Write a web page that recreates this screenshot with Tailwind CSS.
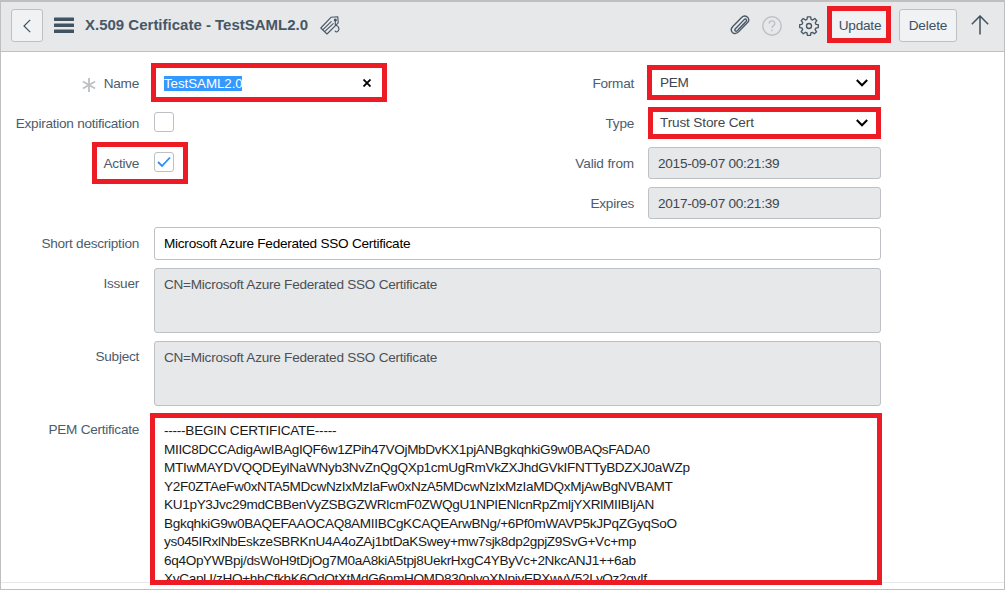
<!DOCTYPE html>
<html lang="en">
<head>
<meta charset="utf-8">
<title>X.509 Certificate</title>
<script src="https://cdn.jsdelivr.net/npm/@tailwindcss/browser@4"></script>
</head>
<body class="bg-white">
<div class="w-[1005px] h-[590px] overflow-hidden border border-[#bfbfbf] border-t-2 flex flex-col font-['Liberation_Sans',Arial,sans-serif] text-[13.6px] tracking-[-0.26px] leading-4 text-[#4d5c6b]">
  <header class="h-[50px] shrink-0 bg-[#e6e8ea] border-b border-[#bdc0c4] flex items-start pl-2.5 pr-[15px] pt-[7px]">
    <button class="w-8 h-[33px] border border-[#bdc0c4] rounded-[3px] bg-[#f1f2f4] flex items-center justify-center">
      <svg class="w-2 h-3.5" viewBox="0 0 8 14" fill="none" stroke="#40505f" stroke-width="1.2"><path d="M7.2.8 1 7l6.2 6.2"/></svg>
    </button>
    <svg class="w-5 h-4 ml-[11px] mt-2" viewBox="0 0 20 16" fill="#43525f"><rect y=".4" width="20" height="3.6" rx=".6"/><rect y="6.4" width="20" height="3.6" rx=".6"/><rect y="12.4" width="20" height="3.6" rx=".6"/></svg>
    <h1 class="ml-[11px] mt-2 w-[224px] whitespace-nowrap text-[15px] tracking-normal font-bold text-[#485766]">X.509 Certificate - TestSAML2.0</h1>
    <svg class="w-5 h-[19px] ml-[11px] mt-[7px]" viewBox="0 0 20 19" fill="none" stroke="#485766" stroke-width="1.1" stroke-linejoin="round" stroke-linecap="round"><path d="M11.2 1.2 17.8.8l.4 6.1L7 18 .8 12zM3.2 13.3l8-7.6M5.2 15.2l8-7.6"/><circle cx="15.3" cy="4" r="1" fill="#485766"/><path d="M15.3 4v4.8c2.4 1 4 2.7 3.5 4.9-.4 2.2-2.6 2.8-3.6 1.4"/></svg>
    <div class="ml-auto flex">
      <svg class="w-5 h-5 mt-1.5" viewBox="0 0 20 20" fill="none" stroke="#485766" stroke-width="1.35" stroke-linecap="round"><path d="m14.5 8.2-7.1 7.4c-1.6 1.6-3.5-.3-2-1.9l8.8-9.1M17.8 7.2l-9 9.4c-1.8 1.9-4.4 2.7-6.4.8-2-2-1.2-4.3.6-6.2l8.6-8.7c1.4-1.5 3.8-2 5.7-.4 2 1.7 1.8 3.7.5 5.1zM14.2 4.6c1.6-1.6 3.3.4 1.8 1.9l-7.7 8"/></svg>
      <svg class="w-5 h-5 ml-3 mt-[7px]" viewBox="0 0 20 20" fill="none" stroke="#bdc1c6" stroke-width="1.4"><circle cx="10" cy="10" r="9.2"/><path d="M7.2 7.6c0-3.6 5.6-3.5 5.6-.2 0 2.2-2.8 2.2-2.8 4.6M10 13.6v1.6"/></svg>
      <svg class="w-5 h-5 ml-[17px] mt-[7px]" viewBox="0 0 20 20" fill="none" stroke="#485766" stroke-width="1.35" stroke-linejoin="round"><path d="m8.4.8h3.2l.5 2.6 1.5.6L15.8 2.5l2 2.2-1.5 2 .6 1.6 2.4.4v2.9l-2.5.5-.7 1.5 1.5 2.2-2.2 2-2-1.4-1.5.6-.4 2.3H8.4L8 16.9l-1.5-.6-2.2 1.4-2.1-2 1.5-2.2-.7-1.5L.7 11.6V8.7L3 8.3l.7-1.6-1.5-2 2-2.2L6.4 4l1.5-.6z"/><circle cx="10" cy="10" r="2.5"/></svg>
      <button class="w-16 h-[37px] ml-2 -mt-[3px] pt-0.5 pl-0.5 border-5 border-[#ed1c24] bg-[#f1f2f4] text-center text-[13.6px] tracking-[-0.2px] text-[#40505f]"><span>Update</span></button>
      <button class="w-[58px] h-[33px] ml-2 border border-[#bdc0c4] rounded-[3px] bg-[#f1f2f4] text-center text-[13.6px] tracking-[-0.1px] text-[#40505f]"><span>Delete</span></button>
      <svg class="w-[18px] h-5 ml-3.5 mt-1.5" viewBox="0 0 18 20" fill="none" stroke="#40505f" stroke-width="1.5"><path d="M9 19.5V1M.8 9.2 9 1l8.2 8.2"/></svg>
    </div>
  </header>

  <main class="flex flex-col h-[531px] shrink-0 border-b border-[#e6e8ea]">
    <section class="flex h-[168px] pt-[11px] shrink-0">
      <div class="w-[507px]">
        <div class="flex h-[39px]">
          <div class="w-[138px] flex justify-end gap-2 pt-[13px]">
            <svg class="w-3.5 h-3.5 mt-0.5" viewBox="0 0 14 14" stroke="#bdc0c4" stroke-width="1.8"><path d="M7 0v14M.9 3.5l12.2 7M.9 10.5l12.2-7"/></svg>
            <span>Name</span>
          </div>
          <div class="ml-3 w-[236px] h-[39px] border-5 border-[#ed1c24] flex items-center pl-2 pr-[11px] pt-px justify-between">
            <span class="bg-[#3399ff] text-white h-[15px] leading-[15px] w-[78px] text-[13.33px] tracking-[-0.05px] whitespace-nowrap">TestSAML2.0</span>
            <svg class="w-2 h-2" viewBox="0 0 8 8" stroke="#000" stroke-width="1.8"><path d="m.5.5 7 7m0-7-7 7"/></svg>
          </div>
        </div>
        <div class="flex h-10 pt-2.5">
          <div class="w-[138px] text-right pt-1">Expiration notification</div>
          <div class="ml-[15px] w-5 h-5 border border-[#bdc0c4] rounded-[3px]"></div>
        </div>
        <div class="flex h-[42px] ml-[91px] w-24 border-5 border-[#ed1c24]">
          <div class="w-[42px] text-right pt-[9px]">Active</div>
          <div class="ml-[15px] mt-[5px] w-5 h-5 border border-[#bdc0c4] rounded-[3px] flex items-center justify-center">
            <svg class="w-3.5 h-3" viewBox="0 0 14 12" fill="none" stroke="#278efc" stroke-width="1.8"><path d="m1 6 4 4 8-8.5"/></svg>
          </div>
        </div>
      </div>
      <div class="text-[#40474e]">
        <div class="flex h-[42px] pt-0.5">
          <div class="w-[126px] text-right pt-[11px] text-[#4d5c6b]">Format</div>
          <div class="ml-[13px] w-[233px] h-[35px] border-5 border-[#ed1c24] flex items-center justify-between pl-2 pr-[7px]"><span>PEM</span>
            <svg class="w-3 h-2" viewBox="0 0 12 8" fill="none" stroke="#000" stroke-width="2"><path d="m.8 1 5.2 5.3L11.2 1"/></svg></div>
        </div>
        <div class="flex h-[41px] pt-0.5">
          <div class="w-[126px] text-right pt-[9px] text-[#4d5c6b]">Type</div>
          <div class="ml-3.5 w-[233px] h-8 border-5 border-[#ed1c24] flex items-center justify-between pl-[7px] pr-2"><span class="tracking-[-0.15px]">Trust Store Cert</span>
            <svg class="w-3 h-2" viewBox="0 0 12 8" fill="none" stroke="#000" stroke-width="2"><path d="m.8 1 5.2 5.3L11.2 1"/></svg></div>
        </div>
        <div class="flex h-10 pt-px">
          <div class="w-[126px] text-right pt-[9px] text-[#4d5c6b] tracking-[-0.15px]">Valid from</div>
          <div class="ml-3.5 w-[233px] h-8 border border-[#bdc0c4] rounded-[3px] bg-[#e6e8ea] flex items-center pl-[9px] pt-0.5">2015-09-07 00:21:39</div>
        </div>
        <div class="flex h-10 pt-px">
          <div class="w-[126px] text-right pt-[9px] text-[#4d5c6b]">Expires</div>
          <div class="ml-3.5 w-[233px] h-8 border border-[#bdc0c4] rounded-[3px] bg-[#e6e8ea] flex items-center pl-[9px] pt-0.5">2017-09-07 00:21:39</div>
        </div>
      </div>
    </section>
    <div class="flex h-[41px] mt-[7px] shrink-0">
      <div class="w-[138px] text-right pt-[9px]">Short description</div>
      <div class="ml-[15px] w-[727px] h-[33px] border border-[#bdc0c4] rounded-[3px] flex items-center pl-[9px] text-black">Microsoft Azure Federated SSO Certificate</div>
    </div>
    <div class="flex h-[73px] shrink-0">
      <div class="w-[138px] text-right pt-2">Issuer</div>
      <div class="ml-[15px] w-[727px] h-[65px] border border-[#bdc0c4] rounded-[3px] bg-[#e6e8ea] pt-2 pl-[9px] text-[#4d5054]">CN=Microsoft Azure Federated SSO Certificate</div>
    </div>
    <div class="flex h-[72px] shrink-0">
      <div class="w-[138px] text-right pt-2">Subject</div>
      <div class="ml-[15px] w-[727px] h-[65px] border border-[#bdc0c4] rounded-[3px] bg-[#e6e8ea] pt-2 pl-[9px] text-[#4d5054]">CN=Microsoft Azure Federated SSO Certificate</div>
    </div>
    <div class="flex h-[172px] shrink-0 z-10">
      <div class="w-[138px] text-right pt-[9px]">PEM Certificate</div>
      <div class="ml-[11px] w-[732px] h-[172px] border-5 border-[#ed1c24] bg-white overflow-hidden pt-1 pl-[9px] text-[#1a1a1a] leading-[18.5px] tracking-[-0.34px] whitespace-nowrap">
        <p class="tracking-[-0.26px]">-----BEGIN CERTIFICATE-----</p>
        <p>MIIC8DCCAdigAwIBAgIQF6w1ZPih47VOjMbDvKX1pjANBgkqhkiG9w0BAQsFADA0</p>
        <p>MTIwMAYDVQQDEylNaWNyb3NvZnQgQXp1cmUgRmVkZXJhdGVkIFNTTyBDZXJ0aWZp</p>
        <p>Y2F0ZTAeFw0xNTA5MDcwNzIxMzIaFw0xNzA5MDcwNzIxMzIaMDQxMjAwBgNVBAMT</p>
        <p>KU1pY3Jvc29mdCBBenVyZSBGZWRlcmF0ZWQgU1NPIENlcnRpZmljYXRlMIIBIjAN</p>
        <p>BgkqhkiG9w0BAQEFAAOCAQ8AMIIBCgKCAQEArwBNg/+6Pf0mWAVP5kJPqZGyqSoO</p>
        <p>ys045IRxlNbEskzeSBRKnU4A4oZAj1btDaKSwey+mw7sjk8dp2gpjZ9SvG+Vc+mp</p>
        <p>6q4OpYWBpj/dsWoH9tDjOg7M0aA8kiA5tpj8UekrHxgC4YByVc+2NkcANJ1++6ab</p>
        <p>XyCapU/zHQ+hhCfkhK6QdQtXtMdG6nmHQMD830plyoXNpjyEPXwyV52LyQz2gyIf</p>
      </div>
    </div>
  </main>
</div>
</body>
</html>
